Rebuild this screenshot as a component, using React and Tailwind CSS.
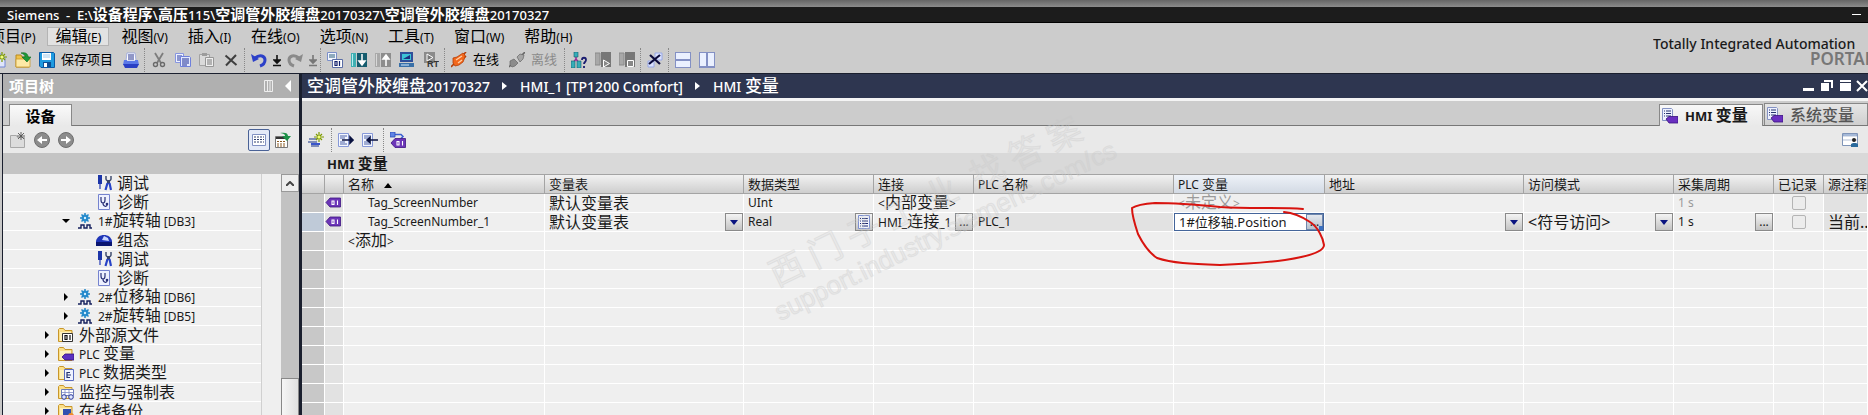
import React, { useState } from "react";

// Chinese glyphs are drawn larger than Latin ones, so Latin runs get their own size
const Mixed = ({ text, latin = "text-[12px]" }) =>
  text.split(/([\u4e00-\u9fff]+)/).filter(Boolean).map((part, i) =>
    /[\u4e00-\u9fff]/.test(part) ? (
      <React.Fragment key={i}>{part}</React.Fragment>
    ) : (
      <span key={i} className={latin}>{part}</span>
    )
  );

const Svg = ({ children, w = 16, className = "" }) => (
  <svg width={w} height="16" viewBox={`0 0 ${w} 16`} className={`shrink-0 ${className}`} fill="none" aria-hidden="true">
    {children}
  </svg>
);

/* ---------- icons ---------- */

const Spark = ({ x = 11, y = 5, color = "#7d9a00" }) => (
  <g stroke={color} strokeWidth="1.2">
    <path d={`M${x} ${y - 5}v10M${x - 5} ${y}h10M${x - 3} ${y - 3}l6 6M${x + 3} ${y - 3}l-6 6`} />
    <circle cx={x} cy={y} r="1.5" fill="#f4ff7a" stroke="none" />
  </g>
);

const NewIcon = () => (
  <Svg>
    <path d="M2 2h8l4 4v9H2z" fill="#dfe6fb" stroke="#7387d6" />
    <Spark />
  </Svg>
);
const OpenIcon = () => (
  <Svg>
    <path d="M1 3h5l1 2h7v10H1z" fill="#f0c24a" stroke="#b98a1e" />
    <path d="M1 15V7h14v8z" fill="#fde9a6" stroke="#c99a2d" strokeWidth=".8" />
    <path d="M6 1c5-1 7 1 7 4h3l-4 5-5-5h3c0-2-1-3-4-4z" fill="#1f9a38" stroke="#0d6b20" strokeWidth=".6" />
  </Svg>
);
const SaveIcon = () => (
  <Svg>
    <path d="M.5.5h14l1 1v14H2l-1.500-1.500z" fill="#1f9be0" stroke="#0a5aa5" />
    <path d="M3 1h9v7H3z" fill="#fff" />
    <path d="M4 3h7M4 5h7" stroke="#9cc9ec" />
    <path d="M4 10h8v5H4z" fill="#0d4f94" />
    <path d="M5 11h3v4H5z" fill="#fff" />
  </Svg>
);
const PrintIcon = () => (
  <Svg>
    <path d="M4 1h8l1 8H3z" fill="#fff" stroke="#8b9be0" strokeWidth=".7" />
    <path d="M5 3h6M5 5h6M5 7h6" stroke="#22308f" />
    <path d="M1 8h3v1h8V8h3l1 5H0z" fill="#5b78e8" />
    <path d="M0 12h16l-2 4H2z" fill="#2a3fc4" />
  </Svg>
);
const CutIcon = () => (
  <Svg>
    <path d="M4 1l6 10M12 1L6 11" stroke="#7d7d7d" strokeWidth="1.800" />
    <circle cx="4.500" cy="12.500" r="2" stroke="#6a6a6a" strokeWidth="1.400" />
    <circle cx="11.500" cy="12.500" r="2" stroke="#6a6a6a" strokeWidth="1.400" />
  </Svg>
);
const CopyIcon = () => (
  <Svg>
    <path d="M.5 1.500h8v9h-8z" fill="#eef2ff" stroke="#8795e0" />
    <path d="M2 4h5M2 6h5M2 8h5" stroke="#2a3aa0" />
    <path d="M5.500 4.500h9l1 1v9h-10z" fill="#e3e9ff" stroke="#6f80dc" />
    <path d="M7 7h7M7 9h7M7 11h7M7 13h5" stroke="#1d2d93" />
  </Svg>
);
const PasteIcon = () => (
  <Svg>
    <path d="M.5 2.500h10v11H.5z" fill="#dadada" stroke="#a3a3a3" />
    <path d="M3 1h5v3H3z" fill="#9c9c9c" />
    <path d="M6.500 5.500h8v9h-8z" fill="#efefef" stroke="#979797" />
    <path d="M8 8h5M8 10h5M8 12h5" stroke="#777" />
  </Svg>
);
const CrossIcon = () => (
  <Svg>
    <path d="M2.500 3.500l11 9.500M13 3L3 13.500" stroke="#3f3f3f" strokeWidth="2" />
  </Svg>
);
const UndoIcon = ({ color = "#2c40c8", flip }) => (
  <Svg className={flip ? "-scale-x-100" : ""}>
    <path d="M0 2l2 8 6-3z" fill={color} />
    <path d="M4 6c5-4 10-2 10 2 0 3-2 5-5 6" stroke={color} strokeWidth="3" />
  </Svg>
);
const StepIcon = ({ color = "#111" }) => (
  <Svg w={8}>
    <path d="M4 3v8M1 8l3 3 3-3zM0 13.500h8" stroke={color} strokeWidth="1.600" fill={color} />
  </Svg>
);
const CompileIcon = () => (
  <Svg>
    <path d="M.5.500h9v8h-9z" fill="#f3f6ff" stroke="#7b8fc9" />
    <path d="M2 3h6M2 5h6" stroke="#2b5f7d" />
    <path d="M5.500 7.500h10v8h-10z" fill="#fff" stroke="#5a6da5" />
    <path d="M8 9.500h2v4H8zM12.500 9v5" stroke="#111f6b" strokeWidth="1.200" />
  </Svg>
);
const LoadIcon = ({ up }) => (
  <Svg>
    <path d="M0 1h5v14H0z" fill={up ? "#a9a9a9" : "#3fb0b3"} />
    <path d="M1.500 2v12" stroke={up ? "#d8d8d8" : "#b6eef0"} />
    <path d="M6 1h10v14H6z" fill={up ? "#8d8d8d" : "#155c6e"} />
    <path d={up ? "M11 14V5M8 7l3-4 3 4z" : "M11 2v9M8 9l3 4 3-4z"} stroke="#fff" strokeWidth="1.500" fill="#fff" />
  </Svg>
);
const SimIcon = () => (
  <Svg>
    <path d="M1 0h13v10H1z" fill="#2f4f9a" />
    <path d="M3 2h9v6H3z" fill="#3cc3d6" />
    <path d="M4 7l7-4v4z" fill="#1c2f80" />
    <path d="M0 11h15v4H0z" fill="#3970a8" />
    <path d="M2 13h8" stroke="#d9ecff" />
  </Svg>
);
const RtIcon = () => (
  <Svg>
    <path d="M1 0h11v11H1z" fill="#8a8a8a" />
    <path d="M4 2l6 3.500L4 9z" stroke="#fff" fill="#777" />
    <text x="4" y="15" fontSize="9" fontWeight="700" fill="#333" fontFamily="Liberation Sans, sans-serif">RT</text>
  </Svg>
);
const PlugIcon = () => (
  <Svg>
    <path d="M0 15l4-4M11 4l4-4M13 6l2-2" stroke="#b53d06" strokeWidth="1.600" />
    <path d="M2 6l4-1 6-4 2 2v2l-2 5-4 3-4 1-2-3z" fill="#f2671c" stroke="#b53d06" strokeWidth=".8" />
    <path d="M5 8l6-4M7 11l4-3" stroke="#ffd0a8" strokeWidth="1.300" />
  </Svg>
);
const GrayPlugIcon = () => (
  <Svg>
    <path d="M0 15l3-3M12 4l4-4" stroke="#666" strokeWidth="1.600" />
    <path d="M1 9l4-2 4 4-3 3-3 1-2-2z" fill="#8c8c8c" stroke="#666" strokeWidth=".7" />
    <path d="M8 5l3-3 4 1-1 4-3 3z" fill="#a5a5a5" stroke="#666" strokeWidth=".7" />
  </Svg>
);
const AccessIcon = () => (
  <Svg>
    <path d="M5 4v4M5 7L2 11M5 7l3 4" stroke="#9a2a9a" strokeWidth="1.500" />
    <path d="M3 0h4v5H3zM0 9h4v7H0zM6 9h4v7H6z" fill="#35adb8" stroke="#13606b" strokeWidth=".6" />
    <path d="M11 8c0-3 4-3 4 0 0 2-2 2-2 4M13 14v2" stroke="#1a1c70" strokeWidth="1.800" />
  </Svg>
);
const StartIcon = ({ stop }) => (
  <Svg>
    <path d="M0 1h5v12H0z" fill="#a8a8a8" stroke="#8a8a8a" />
    <path d="M6 0h10v15H6z" fill="#777" />
    {stop ? (
      <path d="M8.500 8.500h6v6h-6z" fill="#888" stroke="#fff" />
    ) : (
      <path d="M8.500 8v7l6-3.500z" fill="#888" stroke="#fff" />
    )}
  </Svg>
);
const CrossRefIcon = () => (
  <Svg>
    <path d="M8 1h7v7H8zM1 9h6v6H1z" fill="#dbe3ff" stroke="#98a8e6" />
    <path d="M3 3l10 9M13 3L2 12" stroke="#0b0b3c" strokeWidth="2.200" />
  </Svg>
);
const SplitIcon = ({ vertical }) => (
  <Svg>
    <path d="M0 0h16v16H0z" fill="#8390c4" />
    <path d={vertical ? "M1 1h6v13H1zM9 1h6v13H9z" : "M1 1h14v6H1zM1 9h14v6H1z"} fill="#eaf0ff" />
  </Svg>
);
const AddFolderIcon = () => (
  <Svg>
    <path d="M.5 3.500h6l1 2h7v10H.5z" fill="#dcdcdc" stroke="#a8a8a8" />
    <path d="M11 0v8M7 4h8M8 1l6 6M14 1L8 7" stroke="#555" strokeWidth=".9" />
  </Svg>
);
const RoundArrow = ({ right }) => (
  <Svg className={right ? "-scale-x-100" : ""}>
    <circle cx="8" cy="8" r="7.500" fill="#8c8c8c" stroke="#6e6e6e" />
    <path d="M3 8l5-4v3h5v2H8v3z" fill="#fff" />
  </Svg>
);
const DetailIcon = () => (
  <Svg>
    <path d="M1.500 2.500h13v11h-13z" fill="#fff" stroke="#8191c2" />
    <path d="M3 5h10M3 7.500h10M3 10h10" stroke="#30406f" strokeDasharray="2 1" />
  </Svg>
);
const GridArrowIcon = () => (
  <Svg>
    <path d="M.5 4.500h12v11H.5z" fill="#fff" stroke="#777" />
    <path d="M1 5h11v2H1z" fill="#333" />
    <path d="M2 9.500h9M2 12h9M2 14h9" stroke="#8a5a20" strokeDasharray="2 1" />
    <path d="M5 1c5-1 8 0 8 3h3l-4 5-5-5h3c0-2-1-2-5-3z" fill="#1c9147" />
  </Svg>
);
const AddRowIcon = () => (
  <Svg>
    <path d="M1 7h8M0 10h9M3 14h8" stroke="#7f8db8" strokeWidth="2" />
    <path d="M3 12h9" stroke="#3a55c9" strokeWidth="2" />
    <Spark />
  </Svg>
);
const ExportIcon = ({ back }) => (
  <Svg>
    <path d="M.5 1.500h10v13H.5z" fill="#f4f7ff" stroke="#8799d8" />
    <path d="M2 4h7M2 6h5M2 10h5M2 12h7" stroke="#4d62a8" />
    <path d={back ? "M16 8H7M5 8l3-2.500v5z" : "M4 8h9M15 8l-3-3v6z"} stroke="#0a1240" strokeWidth="1.600" fill="#0a1240" />
  </Svg>
);
const TagShape = ({ x = 0, y = 0 }) => (
  <g transform={`translate(${x} ${y})`}>
    <path d="M0 4.500L4 0h10.500v9H4z" fill="#6c35b8" stroke="#3d1482" strokeWidth=".8" />
    <path d="M6 3h2v3.500H6zM11.500 2.500V7" stroke="#fff" strokeWidth="1.100" />
  </g>
);
const TagIcon = () => (
  <Svg><TagShape x={1} y={3} /></Svg>
);
const ConnectIcon = () => (
  <Svg>
    <path d="M5 2.500h6l2 2-2 2" stroke="#3b5fd0" strokeWidth="1.500" />
    <path d="M0 0h5v5H0z" fill="#5f83e6" stroke="#2b49b4" strokeWidth=".8" />
    <TagShape x={1} y={6.5} />
  </Svg>
);
const TabIcon = () => (
  <Svg>
    <path d="M.5.500h9l1 1v11H.5z" fill="#eef2ff" stroke="#8492c4" />
    <path d="M2 3h1M4 3h5M2 5.500h1M4 5.500h5M2 8h1M4 8h5" stroke="#26346f" />
    <path d="M4 11l3-2.500h9v6.500H7z" fill="#6a2fc0" stroke="#3a1180" strokeWidth=".8" />
  </Svg>
);
const TuneIcon = () => (
  <Svg>
    <path d="M2 0h4v9H2z" fill="#1c35a8" />
    <path d="M4 9v5" stroke="#4a5cc0" strokeWidth="1.500" />
    <path d="M10 1v3l1 2M15 1v3l-1 2" stroke="#4c5878" strokeWidth="1.600" />
    <path d="M12.500 5v4" stroke="#39456b" strokeWidth="3" />
    <path d="M11.500 8L9.500 15M13.500 8l1.500 7" stroke="#2743c7" strokeWidth="2.200" />
  </Svg>
);
const DiagIcon = () => (
  <Svg>
    <path d="M2.500.500h11v15h-11z" fill="#eef1ff" stroke="#7583cf" />
    <path d="M5 3v3c0 4 4 4 4 0V3M7 9c0 4 4 4 4 2" stroke="#2a3178" strokeWidth="1.200" />
    <circle cx="11" cy="10" r="1.300" fill="#2a3178" />
  </Svg>
);
const ConfigIcon = () => (
  <Svg>
    <path d="M0 9c1-4 4-6 8-6s7 2 8 6v5H0z" fill="#1f35b8" />
    <path d="M6 8l2-4 4 2 1 3z" fill="#c9d6ff" />
    <path d="M0 10h16v4H0z" fill="#0a1570" />
  </Svg>
);
const AxisIcon = () => (
  <Svg>
    <circle cx="8" cy="5" r="3.500" fill="#2f9bdc" />
    <path d="M8 0v10M3 5h10M4.500 1.500l7 7M11.500 1.500l-7 7" stroke="#2386c8" strokeWidth="1.500" />
    <circle cx="8" cy="5" r="1.200" fill="#d7f0ff" />
    <path d="M1 15h3v-3h3v3h3v-3h3v3h2" stroke="#15205e" strokeWidth="1.400" />
  </Svg>
);
const FolderIcon = ({ kind }) => (
  <Svg>
    <path d="M.5 14.500v-12l1-1h4l1.500 2h7v11z" fill="#fbe08a" stroke="#c8962a" />
    <path d="M2 5h11v9H2z" fill="#fdf0bd" />
    {kind === "source" && <><path d="M4.500 6.500h10v8h-10z" fill="#fff" stroke="#333" /><path d="M7 8.500h2v4H7zM12 8v5" stroke="#111" strokeWidth="1.200" /></>}
    {kind === "tag" && <path d="M4 11l3-3h9v6H7z" fill="#5a2fc0" stroke="#331080" strokeWidth=".8" />}
    {kind === "type" && <><path d="M6.500 4.500h9v11h-9z" fill="#eef2ff" stroke="#5a6bbf" /><path d="M9 7v6M9 7.500h3M9 10h4M9 12.500h3" stroke="#26346f" strokeWidth="1.200" /></>}
    {kind === "watch" && <><path d="M3.500 5.500h12v6h-12z" fill="#fff" stroke="#6d7cb8" /><path d="M4 8.500h11M7 6v5M11 6v5" stroke="#7d8cc8" strokeWidth=".8" /><circle cx="6" cy="13" r="2.300" fill="#dfe8ff" stroke="#27369a" /><circle cx="13" cy="13" r="2.300" fill="#dfe8ff" stroke="#27369a" /></>}
    {kind === "backup" && <><path d="M5 6h8v8H5z" fill="#3350b0" /><circle cx="13" cy="13" r="3" fill="#f08a2a" /></>}
  </Svg>
);
const PanelIcon = () => (
  <Svg>
    <path d="M.5 1.500h15v12H.5z" fill="#fff" stroke="#7f95b8" />
    <path d="M1 2h14v2H1zM1 8h14" fill="#b5c9e6" stroke="#7f95b8" strokeWidth=".6" />
    <circle cx="12" cy="8" r="2" fill="#222" />
    <path d="M9 15v-3l2-1h3l2 1v3z" fill="#2a6a9c" />
  </Svg>
);

/* ---------- small pieces ---------- */

const Sep = () => <span className="mx-px h-6 w-0.5 shrink-0 border-l border-dotted border-[#888]" />;

const ToolButton = ({ label, children, text, disabled, tight }) => (
  <button
    type="button"
    aria-label={label}
    className={`flex h-6 shrink-0 items-center gap-1.5 whitespace-nowrap text-[13px] ${tight ? "px-0.5" : text ? "pl-1 pr-1.5" : "px-1"} ${disabled ? "text-[#8a8a8a]" : "text-black"}`}
  >
    {children}
    {text && <span>{text}</span>}
  </button>
);

const Caret = () => (
  <svg width="8" height="5" viewBox="0 0 8 5" aria-hidden="true">
    <path d="M0 0h8L4 5z" fill="#0a1480" />
  </svg>
);

const CELL_BUTTON =
  "flex h-[18px] w-[18px] shrink-0 items-center justify-center border border-[#8a8a8a] bg-linear-to-b from-[#f4f4f4] to-[#c4c4c4]";

const MoreButton = ({ label }) => (
  <button type="button" aria-label={label} className={`${CELL_BUTTON} text-[12px] leading-none`}>...</button>
);

const SelectCell = ({ label, value }) => (
  <div className="relative flex h-[18px] items-center">
    <select aria-label={label} defaultValue={value} className="h-[18px] w-full appearance-none pl-1 leading-[18px] outline-none">
      <option>{value}</option>
    </select>
    <span className={`${CELL_BUTTON} pointer-events-none absolute right-0 top-0`}>
      <Caret />
    </span>
  </div>
);

/* ---------- data ---------- */

const MENU = ["项目(P)", "编辑(E)", "视图(V)", "插入(I)", "在线(O)", "选项(N)", "工具(T)", "窗口(W)", "帮助(H)"];

const TREE = [
  { pad: "pl-[93px]", icon: <TuneIcon />, text: "调试" },
  { pad: "pl-[93px]", icon: <DiagIcon />, text: "诊断" },
  { pad: "pl-[59px]", icon: <AxisIcon />, text: "1#旋转轴 [DB3]", arrow: "open" },
  { pad: "pl-[93px]", icon: <ConfigIcon />, text: "组态" },
  { pad: "pl-[93px]", icon: <TuneIcon />, text: "调试" },
  { pad: "pl-[93px]", icon: <DiagIcon />, text: "诊断" },
  { pad: "pl-[59px]", icon: <AxisIcon />, text: "2#位移轴 [DB6]", arrow: "closed" },
  { pad: "pl-[59px]", icon: <AxisIcon />, text: "2#旋转轴 [DB5]", arrow: "closed" },
  { pad: "pl-10", icon: <FolderIcon kind="source" />, text: "外部源文件", arrow: "closed" },
  { pad: "pl-10", icon: <FolderIcon kind="tag" />, text: "PLC 变量", arrow: "closed" },
  { pad: "pl-10", icon: <FolderIcon kind="type" />, text: "PLC 数据类型", arrow: "closed" },
  { pad: "pl-10", icon: <FolderIcon kind="watch" />, text: "监控与强制表", arrow: "closed" },
  { pad: "pl-10", icon: <FolderIcon kind="backup" />, text: "在线备份", arrow: "closed" },
];

const COLUMNS = [
  { name: "名称", width: "w-[201px]", sorted: true },
  { name: "变量表", width: "w-[199px]" },
  { name: "数据类型", width: "w-[130px]" },
  { name: "连接", width: "w-[100px]" },
  { name: "PLC 名称", width: "w-[200px]" },
  { name: "PLC 变量", width: "w-[151px]", active: true },
  { name: "地址", width: "w-[199px]" },
  { name: "访问模式", width: "w-[150px]" },
  { name: "采集周期", width: "w-[100px]" },
  { name: "已记录", width: "w-[50px]" },
  { name: "源注释", width: "" },
];

const EMPTY_ROWS = Array.from({ length: 9 }, (_, i) => i);

/* ---------- regions ---------- */

const TitleBar = () => (
  <header className="bg-[#1c1c1c] text-white">
    <div className="h-[7px] bg-linear-to-b from-[#666] to-[#8c8c8c]" />
    <div className="flex h-4 items-center justify-between border-b border-black pl-[7px] pr-[7px]">
      <h1 className="whitespace-pre text-[15px] font-bold leading-4">
        <Mixed text="Siemens  -  E:\设备程序\高压115\空调管外胶缠盘20170327\空调管外胶缠盘20170327" latin="text-[13px] font-medium" />
      </h1>
      <button type="button" aria-label="最小化" className="h-px w-[9px] bg-white" />
    </div>
  </header>
);

const MenuArea = () => (
  <div className="flex h-[50px] justify-between bg-[#ccc]">
    <div className="min-w-0">
      <nav className="-ml-[19px] flex gap-1 pt-1">
        {MENU.map((item, i) => (
          <button
            key={item}
            type="button"
            className={`h-[19px] whitespace-nowrap border px-[7px] text-[16px] leading-[17px] ${i === 1 ? "border-[#b4b4b4] bg-[#e2e2e2]" : "border-transparent"}`}
          >
            <Mixed text={item} latin="text-[12px]" />
          </button>
        ))}
      </nav>
      <div className="-ml-[13px] flex items-center pt-0.5">
        <ToolButton label="新建项目"><NewIcon /></ToolButton>
        <ToolButton label="打开项目"><OpenIcon /></ToolButton>
        <ToolButton label="保存项目" text="保存项目"><SaveIcon /></ToolButton>
        <ToolButton label="打印"><PrintIcon /></ToolButton>
        <Sep />
        <ToolButton label="剪切"><CutIcon /></ToolButton>
        <ToolButton label="复制"><CopyIcon /></ToolButton>
        <ToolButton label="粘贴"><PasteIcon /></ToolButton>
        <ToolButton label="删除"><CrossIcon /></ToolButton>
        <Sep />
        <ToolButton label="撤消"><UndoIcon /></ToolButton>
        <ToolButton label="撤消列表" tight><StepIcon /></ToolButton>
        <ToolButton label="重做"><UndoIcon color="#8a8a8a" flip /></ToolButton>
        <ToolButton label="重做列表" tight><StepIcon color="#777" /></ToolButton>
        <Sep />
        <ToolButton label="编译"><CompileIcon /></ToolButton>
        <ToolButton label="下载到设备"><LoadIcon /></ToolButton>
        <ToolButton label="从设备上传"><LoadIcon up /></ToolButton>
        <ToolButton label="启动仿真"><SimIcon /></ToolButton>
        <ToolButton label="启动运行系统"><RtIcon /></ToolButton>
        <Sep />
        <ToolButton label="转至在线" text="在线"><PlugIcon /></ToolButton>
        <ToolButton label="转至离线" text="离线" disabled><GrayPlugIcon /></ToolButton>
        <Sep />
        <ToolButton label="可访问的设备"><AccessIcon /></ToolButton>
        <ToolButton label="启动 CPU"><StartIcon /></ToolButton>
        <ToolButton label="停止 CPU"><StartIcon stop /></ToolButton>
        <Sep />
        <ToolButton label="交叉引用"><CrossRefIcon /></ToolButton>
        <Sep />
        <ToolButton label="水平拆分"><SplitIcon /></ToolButton>
        <ToolButton label="垂直拆分"><SplitIcon vertical /></ToolButton>
      </div>
    </div>
    <div className="w-[215px] shrink-0 overflow-hidden whitespace-nowrap pt-3">
      <p className="text-[14px] font-medium leading-[18px] text-[#1a1a1a]">Totally Integrated Automation</p>
      <p className="pl-[157px] text-[17px] font-semibold leading-3 text-[#777]">PORTAL</p>
    </div>
  </div>
);

const TreeRow = ({ pad, icon, text, arrow }) => (
  <li className={`flex h-[19px] items-center border-b border-white ${pad}`}>
    {arrow && (
      <svg width="8" height="8" viewBox="0 0 8 8" className="mr-[7px] shrink-0" aria-hidden="true">
        <path d={arrow === "open" ? "M0 2h8L4 6z" : "M2 0l4 4-4 4z"} fill="#000" />
      </svg>
    )}
    {icon}
    <span className="whitespace-nowrap pl-[5px] text-[16px] leading-[18px] text-[#1a1a1a]">
      <Mixed text={text} latin="text-[12px]" />
    </span>
  </li>
);

const ProjectTree = () => (
  <aside className="flex w-[300px] shrink-0 flex-col border-l border-r-3 border-[#1a1f2e]">
    <div className="flex h-6 items-center justify-between bg-[#b0b0b0] pl-1.5 pr-2 text-white">
      <h2 className="text-[15px] font-bold">项目树</h2>
      <div className="flex items-center gap-3">
        <svg width="9" height="12" viewBox="0 0 9 12" aria-hidden="true">
          <path d="M.5.500h8v11h-8zM3.500 0v12M6 0v12" fill="none" stroke="#eee" />
        </svg>
        <svg width="6" height="12" viewBox="0 0 6 12" aria-hidden="true">
          <path d="M6 0v12L0 6z" fill="#fff" />
        </svg>
      </div>
    </div>
    <div className="flex h-[28px] items-end border-b border-t-3 border-b-[#777] border-t-[#f4f4f4] bg-[#ccc] pl-1.5">
      <button type="button" className="-mb-px h-[22px] w-[63px] border border-b-0 border-[#888] bg-linear-to-b from-[#fafafa] to-[#e9e9e9] text-[15px] font-bold leading-5">
        设备
      </button>
    </div>
    <div className="flex h-[27px] items-center bg-[#e9e9e9] pl-[3px] pr-1">
      <ToolButton label="新增文件夹"><AddFolderIcon /></ToolButton>
      <ToolButton label="后退"><RoundArrow /></ToolButton>
      <ToolButton label="前进"><RoundArrow right /></ToolButton>
      <div className="ml-auto flex items-center gap-px">
        <button type="button" aria-label="详细信息" className="flex h-[22px] w-[22px] items-center justify-center rounded-xs border border-[#4a6296] bg-[#e4eaf8]">
          <DetailIcon />
        </button>
        <ToolButton label="显示列表"><GridArrowIcon /></ToolButton>
      </div>
    </div>
    <div className="h-[21px] shrink-0 bg-[#c4c4c4]" />
    <div className="flex min-h-0 flex-1 overflow-hidden bg-[#efefef]">
      <ul className="min-w-0 flex-1">
        {TREE.map((row, i) => (
          <TreeRow key={i} {...row} />
        ))}
      </ul>
      <div className="w-5 shrink-0 border-l border-[#d0d0d0]" />
      <div className="flex w-[18px] shrink-0 flex-col justify-between bg-[#c2c2c2]">
        <button type="button" aria-label="向上滚动" className="flex h-[18px] items-center justify-center border border-[#999] bg-[#eee]">
          <svg width="8" height="5" viewBox="0 0 8 5" aria-hidden="true">
            <path d="M0 5l4-4 4 4" fill="none" stroke="#444" strokeWidth="2" />
          </svg>
        </button>
        <div className="h-[37px] border border-b-0 border-[#888] bg-linear-to-r from-[#f6f6f6] to-[#e0e0e0]" />
      </div>
    </div>
  </aside>
);

const Crumb = ({ children }) => <span className="whitespace-nowrap">{children}</span>;
const CrumbArrow = () => (
  <svg width="6" height="8" viewBox="0 0 6 8" className="mx-3 shrink-0" aria-hidden="true">
    <path d="M0 0l5 4-5 4z" fill="#fff" />
  </svg>
);

const EditorTop = ({ tab, onTab }) => (
  <>
    <div className="flex h-6 shrink-0 items-center bg-[#2e3650] pl-[5px] text-[17px] font-medium text-white">
      <Crumb><Mixed text="空调管外胶缠盘20170327" latin="text-[14px]" /></Crumb>
      <CrumbArrow />
      <Crumb><Mixed text="HMI_1 [TP1200 Comfort]" latin="text-[14px]" /></Crumb>
      <CrumbArrow />
      <Crumb><Mixed text="HMI 变量" latin="text-[14px]" /></Crumb>
      <svg width="65" height="12" viewBox="0 0 65 12" className="ml-auto shrink-0" aria-hidden="true">
        <path d="M0 8h11v3H0zM18 3h8v8h-8zM37 0h11v2H37zM37 3h11v8H37z" fill="#fff" />
        <path d="M21 1h8v7" stroke="#fff" strokeWidth="2" fill="none" />
        <path d="M54 1l10 10M64 1L54 11" stroke="#fff" strokeWidth="2" />
      </svg>
    </div>
    <div className="flex h-[28px] shrink-0 items-end justify-end gap-px border-b border-t-3 border-b-[#777] border-t-[#f4f4f4] bg-[#ccc]">
      {[["hmi", "HMI 变量"], ["system", "系统变量"]].map(([id, label]) => (
        <button
          key={id}
          type="button"
          onClick={() => onTab(id)}
          className={`flex h-[22px] w-[104px] items-center gap-[7px] whitespace-nowrap border border-b-0 border-[#888] pl-0.5 text-[16px] leading-5 ${tab === id ? "-mb-px bg-linear-to-b from-[#f8f8f8] to-[#e9e9e9] font-bold text-[#1a1a1a]" : "bg-linear-to-b from-[#e6e6e6] to-[#cfcfcf] font-medium text-[#555]"}`}
        >
          <TabIcon />
          <span><Mixed text={label} latin="text-[13px]" /></span>
        </button>
      ))}
    </div>
    <div className="flex h-[27px] shrink-0 items-center bg-[#e9e9e9] pl-0.5">
      <ToolButton label="添加行"><AddRowIcon /></ToolButton>
      <span className="w-0.5" />
      <Sep />
      <ToolButton label="导出"><ExportIcon /></ToolButton>
      <ToolButton label="导入"><ExportIcon back /></ToolButton>
      <Sep />
      <ToolButton label="连接变量"><ConnectIcon /></ToolButton>
      <div className="ml-auto pr-1.5">
        <ToolButton label="布局"><PanelIcon /></ToolButton>
      </div>
    </div>
  </>
);

const Td = ({ className = "", children }) => (
  <td className={`h-[19px] overflow-hidden whitespace-nowrap border-b border-r border-white p-0 align-middle leading-4 ${className}`}>{children}</td>
);

const LeadCells = ({ selected, tag }) => (
  <>
    <Td className={selected ? "bg-[#bfcad8]" : "bg-[#c8c8c8]"} />
    <Td className="bg-[#e2e2e2]">{tag && <TagIcon />}</Td>
  </>
);

const LoggedBox = ({ label }) => (
  <div className="flex justify-center">
    <input type="checkbox" aria-label={label} disabled className="h-[14px] w-[14px] appearance-none rounded-xs border border-[#b4b4b4] bg-[#ececec]" />
  </div>
);

const TagTable = () => {
  const [plcTag, setPlcTag] = useState("1#位移轴.Position");

  return (
    <table className="w-full table-fixed border-separate border-spacing-0 text-left text-[16px] text-[#1a1a1a]">
      <colgroup>
        <col className="w-[23px]" />
        <col className="w-[19px]" />
        {COLUMNS.map((c) => <col key={c.name} className={c.width} />)}
      </colgroup>
      <thead>
        <tr>
          <th className="border-y border-r border-[#a4a4a4] bg-linear-to-b from-[#f2f2f2] to-[#cecece] p-0" />
          <th className="border-y border-r border-[#a4a4a4] bg-linear-to-b from-[#f2f2f2] to-[#cecece] p-0" />
          {COLUMNS.map((c) => (
            <th
              key={c.name}
              className={`h-5 overflow-hidden whitespace-nowrap border-y border-r border-[#a4a4a4] bg-linear-to-b p-0 pl-1 text-[13px] font-normal leading-4 ${c.active ? "from-[#eef2f8] to-[#d3dae4]" : "from-[#f2f2f2] to-[#cecece]"}`}
            >
              <Mixed text={c.name} latin="text-[12px]" />
              {c.sorted && (
                <svg width="8" height="5" viewBox="0 0 8 5" className="ml-2.5 inline-block" aria-hidden="true">
                  <path d="M0 5h8L4 0z" fill="#000" />
                </svg>
              )}
            </th>
          ))}
        </tr>
      </thead>
      <tbody className="bg-[#efefef]">
        <tr>
          <LeadCells tag />
          <Td className="pl-6 text-[12px]">Tag_ScreenNumber</Td>
          <Td className="pl-1">默认变量表</Td>
          <Td className="pl-1 text-[12px]">UInt</Td>
          <Td className="pl-1"><Mixed text="<内部变量>" latin="text-[12px]" /></Td>
          <Td />
          <Td className="pl-1 text-[#9a9a9a]"><Mixed text="<未定义>" latin="text-[12px]" /></Td>
          <Td />
          <Td />
          <Td className="pl-1 text-[12px] text-[#9a9a9a]">1 s</Td>
          <Td><LoggedBox label="已记录 Tag_ScreenNumber" /></Td>
          <Td className="bg-[#e2e2e2]" />
        </tr>
        <tr>
          <LeadCells selected tag />
          <Td className="pl-6 text-[12px]">Tag_ScreenNumber_1</Td>
          <Td><SelectCell label="变量表" value="默认变量表" /></Td>
          <Td className="bg-[#e2e2e2] pl-1 text-[12px]">
            <div className="flex items-center justify-between">
              Real
              <button type="button" aria-label="选择数据类型" className={CELL_BUTTON}>
                <Svg>
                  <path d="M2.500 1.500h11v13h-11z" fill="#f4f7ff" stroke="#7c8fd0" />
                  <path d="M4 4.500h1M6 4.500h6M4 7h1M6 7h6M4 9.500h1M6 9.500h6M4 12h1M6 12h6" stroke="#16246e" />
                </Svg>
              </button>
            </div>
          </Td>
          <Td className="pl-1">
            <div className="flex h-[18px] items-center justify-between">
              <span><Mixed text="HMI_连接_1" latin="text-[12px]" /></span>
              <MoreButton label="选择连接" />
            </div>
          </Td>
          <Td className="bg-[#e2e2e2] pl-1 text-[12px]">PLC_1</Td>
          <Td className="bg-white">
            <div className="relative flex h-[18px] items-center border border-[#44659a]">
              <input
                aria-label="PLC 变量"
                value={plcTag}
                onChange={(e) => setPlcTag(e.target.value)}
                className="h-4 min-w-0 flex-1 bg-white pl-1 text-[13px] leading-4 outline-none"
              />
              <button type="button" aria-label="选择 PLC 变量" className="flex h-4 w-[17px] shrink-0 items-center justify-center border border-[#6f87ad] bg-linear-to-b from-[#e4e8ee] to-[#b9c1cc] text-[12px] leading-none">...</button>
              <span className="absolute bottom-0 right-0 h-1 w-1 bg-[#3a6fc0]" />
            </div>
          </Td>
          <Td><SelectCell label="地址" value="" /></Td>
          <Td><SelectCell label="访问模式" value="<符号访问>" /></Td>
          <Td className="pl-1 text-[12px]">
            <div className="flex items-center justify-between">
              1 s
              <MoreButton label="选择采集周期" />
            </div>
          </Td>
          <Td><LoggedBox label="已记录 Tag_ScreenNumber_1" /></Td>
          <Td className="bg-[#e2e2e2] pl-1">当前..</Td>
        </tr>
        <tr>
          <LeadCells />
          <Td className="pl-1"><Mixed text="<添加>" latin="text-[12px]" /></Td>
          {COLUMNS.slice(1).map((c) => <Td key={c.name} />)}
        </tr>
        {EMPTY_ROWS.map((n) => (
          <tr key={n}>
            <LeadCells />
            {COLUMNS.map((c) => <Td key={c.name} />)}
          </tr>
        ))}
      </tbody>
    </table>
  );
};

// Watermark and hand-drawn marker lie over the editor
const Overlay = () => (
  <div className="pointer-events-none absolute inset-0 overflow-hidden">
    <div className="absolute left-[476px] top-[180px] origin-left -rotate-26 whitespace-nowrap text-[#bbb]/15 [-webkit-text-stroke:1px_rgb(205_205_205/0.4)]">
      <p className="text-[34px] leading-10">西 门 子 工 业 &nbsp;找 答 案</p>
      <p className="-ml-3 font-['Liberation_Sans',sans-serif] text-[26px] leading-8">support.industry.siemens.com/cs</p>
    </div>
    <svg width="200" height="70" viewBox="0 0 200 70" className="absolute left-[828px] top-[126px]" fill="none" aria-hidden="true">
      <path
        d="M173 9C150 7 120 9 90 7C60 4 45 3 25 3C12 4 5 6 2 8C2 14 6 28 8 34C12 42 18 52 27 58C42 63 60 64 90 65C118 64 140 62 155 60C175 57 194 52 194 45C193 38 188 27 180 22C174 18 166 13 154 12"
        stroke="#d8140f"
        strokeWidth="2"
        strokeLinecap="round"
      />
    </svg>
  </div>
);

export default function App() {
  const [tab, setTab] = useState("hmi");

  return (
    <div className="flex h-screen flex-col overflow-hidden bg-[#ccc] font-['Noto_Sans','Noto_Sans_CJK_SC',sans-serif] text-black">
      <TitleBar />
      <MenuArea />
      <div className="flex min-h-0 flex-1 border-t border-[#1a1f2e]">
        <div className="w-0.5 shrink-0 bg-[#c8c8c8]" />
        <ProjectTree />
        <main className="relative flex min-w-0 flex-1 flex-col overflow-hidden bg-[#efefef]">
          <EditorTop tab={tab} onTab={setTab} />
          <h2 className="h-[21px] shrink-0 bg-[#d9d9d9] pl-[25px] text-[15px] font-bold leading-5 text-[#1a1a1a]">
            <Mixed text="HMI 变量" latin="text-[13px]" />
          </h2>
          <TagTable />
          <Overlay />
        </main>
      </div>
    </div>
  );
}
